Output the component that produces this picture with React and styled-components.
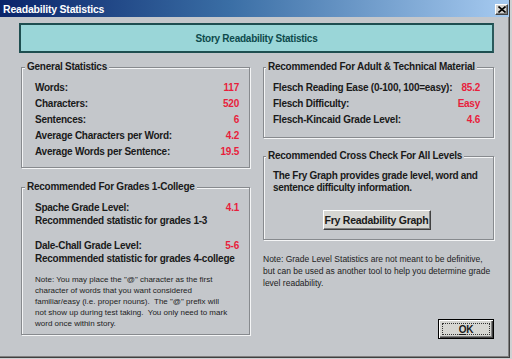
import React from "react";
import styled, { createGlobalStyle } from "styled-components";

const Global = createGlobalStyle`
  html, body { margin: 0; padding: 0; background: #cfd1d3; }
  body { font-family: "Liberation Sans", Arial, sans-serif; }
  * { box-sizing: border-box; }
`;

const FACE = "#c4c7cb";

const Window = styled.div`
  width: 510px;
  height: 358px;
  background: ${FACE};
  border-right: 1px solid #404040;
  border-bottom: 1px solid #404040;
  box-shadow: inset -1px -1px 0 #808080;
  display: flex;
  flex-direction: column;
  overflow: hidden;
`;

const TitleBar = styled.div`
  height: 17px;
  flex: none;
  display: flex;
  align-items: center;
  justify-content: space-between;
  padding: 0 1px 0 3px;
  background: linear-gradient(to right, #0a246a 0%, #3a6ea5 45%, #a6caf0 100%);
`;

const Title = styled.span`
  color: #fff;
  font-weight: bold;
  font-size: 10.5px;
  letter-spacing: -0.2px;
`;

const CloseBox = styled.div`
  width: 13px;
  height: 11px;
  background: #d4d3d0;
  border: 1px solid;
  border-color: #fff #404040 #404040 #fff;
  box-shadow: inset -1px -1px 0 #808080;
  display: flex;
  align-items: center;
  justify-content: center;
  margin-top: 1px;
`;

const Body = styled.div`
  padding: 6px 15px 0 19px;
  display: flex;
  flex-direction: column;
`;

const Banner = styled.div`
  height: 30px;
  background: #9ad6d8;
  border: 2px solid #1e4e50;
  border-right-color: #2a5a5c;
  display: flex;
  align-items: center;
  justify-content: center;
  color: #0d4a4c;
  font-weight: bold;
  font-size: 10px;
  letter-spacing: -0.25px;
`;

const Columns = styled.div`
  display: grid;
  grid-template-columns: 229px 231px;
  column-gap: 13px;
  padding-left: 2px;
  margin-top: 8px;
`;

const Column = styled.div`
  display: flex;
  flex-direction: column;
`;

const Group = styled.fieldset`
  margin: ${(p) => p.$top || 0}px 0 0 0;
  min-width: 0;
  padding: ${(p) => p.$pad};
  border: 1px solid #878a8e;
  box-shadow: inset 1px 1px 0 #f4f5f6, 1px 1px 0 #f4f5f6;
`;

const Legend = styled.legend`
  margin-left: ${(p) => p.$shift}px;
  padding: 0 2px;
  background: ${FACE};
  font-weight: bold;
  font-size: 10px;
  line-height: 12px;
  letter-spacing: -0.25px;
  color: #1a1a1a;
`;

const StatRow = styled.div`
  display: flex;
  justify-content: space-between;
  align-items: center;
  line-height: ${(p) => p.$lh || 16}px;
  font-size: 10px;
  font-weight: bold;
  letter-spacing: -0.25px;
  color: #1a1a1a;
`;

const Value = styled.span`
  color: #e81e3c;
`;

const SubLine = styled.div`
  line-height: 13px;
  font-size: 10px;
  font-weight: bold;
  letter-spacing: -0.25px;
  color: #1a1a1a;
`;

const Stat = styled.div`
  margin-top: ${(p) => p.$top || 0}px;
`;

const Note = styled.div`
  margin-top: ${(p) => p.$top}px;
  font-size: ${(p) => p.$size}px;
  line-height: ${(p) => p.$lh}px;
  color: #222;
  white-space: pre;
`;

const Paragraph = styled.div`
  font-size: 10px;
  font-weight: bold;
  line-height: 12px;
  letter-spacing: -0.3px;
  color: #1a1a1a;
`;

const Raised = styled.button`
  font-family: "Liberation Sans", Arial, sans-serif;
  font-weight: bold;
  font-size: 10px;
  letter-spacing: -0.25px;
  color: #1a1a1a;
  background: #d6d6d2;
  border: 1px solid;
  border-color: #fff #404040 #404040 #fff;
  box-shadow: inset -1px -1px 0 #808080;
  padding: 0;
  display: flex;
  align-items: center;
  justify-content: center;
`;

const FryButton = styled(Raised)`
  width: 108px;
  height: 20px;
  margin: 16px auto 0;
  font-size: 10.5px;
`;

const OkButton = styled(Raised)`
  width: 56px;
  height: 20px;
  align-self: flex-end;
  margin-top: 30px;
  border: 1px solid #000;
  box-shadow: inset 1px 1px 0 #fff, inset -1px -1px 0 #404040, inset -2px -2px 0 #808080;
  padding: 3px;
  font-size: 10px;
`;

const FocusRing = styled.span`
  flex: 1;
  align-self: stretch;
  border: 1px dotted #333;
  display: flex;
  align-items: center;
  justify-content: center;
`;

const leftNote = `Note: You may place the "@" character as the first
character of words that you want considered
familiar/easy (i.e. proper nouns).  The "@" prefix will
not show up during test taking.  You only need to mark
word once within story.`;

const rightNote = `Note: Grade Level Statistics are not meant to be definitive,
but can be used as another tool to help you determine grade
level readability.`;

const general = [
  ["Words:", "117"],
  ["Characters:", "520"],
  ["Sentences:", "6"],
  ["Average Characters per Word:", "4.2"],
  ["Average Words per Sentence:", "19.5"],
];

const adult = [
  ["Flesch Reading Ease (0-100, 100=easy):", "85.2"],
  ["Flesch Difficulty:", "Easy"],
  ["Flesch-Kincaid Grade Level:", "4.6"],
];

export default function App() {
  return (
    <>
      <Global />
      <Window>
        <TitleBar>
          <Title>Readability Statistics</Title>
          <CloseBox>
            <svg width="8" height="7" viewBox="0 0 8 7">
              <path d="M0.5 0.5 L7.5 6.5 M7.5 0.5 L0.5 6.5" stroke="#000" strokeWidth="1.6" />
            </svg>
          </CloseBox>
        </TitleBar>
        <Body>
          <Banner>Story Readability Statistics</Banner>
          <Columns>
            <Column>
              <Group $pad="7px 10px 7px 13px">
                <Legend $shift={-10}>General Statistics</Legend>
                {general.map(([l, v]) => (
                  <StatRow key={l}>
                    <span>{l}</span>
                    <Value>{v}</Value>
                  </StatRow>
                ))}
              </Group>
              <Group $top={13} $pad="8px 10px 5px 13px">
                <Legend $shift={-10}>Recommended For Grades 1-College</Legend>
                <Stat>
                  <StatRow $lh={13}>
                    <span>Spache Grade Level:</span>
                    <Value>4.1</Value>
                  </StatRow>
                  <SubLine>Recommended statistic for grades 1-3</SubLine>
                </Stat>
                <Stat $top={12}>
                  <StatRow $lh={13}>
                    <span>Dale-Chall Grade Level:</span>
                    <Value>5-6</Value>
                  </StatRow>
                  <SubLine>Recommended statistic for grades 4-college</SubLine>
                </Stat>
                <Note $top={9} $lh={11} $size={8}>{leftNote}</Note>
              </Group>
            </Column>
            <Column>
              <Group $pad="7px 13px 9px 9px">
                <Legend $shift={-7}>Recommended For Adult &amp; Technical Material</Legend>
                {adult.map(([l, v]) => (
                  <StatRow key={l}>
                    <span>{l}</span>
                    <Value>{v}</Value>
                  </StatRow>
                ))}
              </Group>
              <Group $top={12} $pad="8px 13px 9px 9px">
                <Legend $shift={-7}>Recommended Cross Check For All Levels</Legend>
                <Paragraph>
                  The Fry Graph provides grade level, word and
                  <br />
                  sentence difficulty information.
                </Paragraph>
                <FryButton>Fry Readability Graph</FryButton>
              </Group>
              <Note $top={13} $lh={12} $size={8.5}>{rightNote}</Note>
              <OkButton>
                <FocusRing>
                  <u>O</u>K
                </FocusRing>
              </OkButton>
            </Column>
          </Columns>
        </Body>
      </Window>
    </>
  );
}
